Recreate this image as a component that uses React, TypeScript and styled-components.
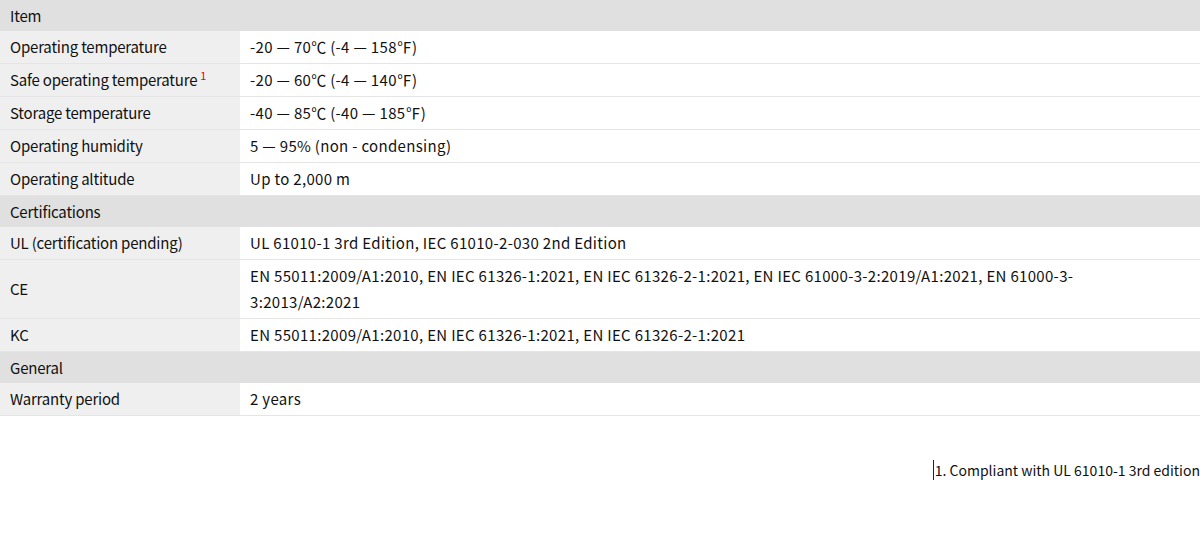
import React from "react";
import styled, { createGlobalStyle } from "styled-components";

const GlobalStyle = createGlobalStyle`
  html, body {
    margin: 0;
    padding: 0;
    background: #fff;
  }
  body {
    font-family: "Noto Sans CJK KR", "Noto Sans", sans-serif;
    color: #111;
  }
`;

const Page = styled.div`
  width: 1200px;
`;

const SpecTable = styled.table`
  width: 100%;
  border-collapse: collapse;
  font-size: 15px;
`;

const GroupCell = styled.th`
  background: #e0e0e0;
  text-align: left;
  font-weight: 400;
  height: 31px;
  padding: 0 10px;
  line-height: 26px;
  letter-spacing: -0.2px;
`;

const Row = styled.tr`
  border-bottom: 1px solid #e5e5e5;
`;

const LabelCell = styled.td`
  width: 220px;
  background: #efefef;
  padding: 3px 10px;
  height: 26px;
  line-height: 26px;
  vertical-align: middle;
  letter-spacing: -0.2px;
`;

const ValueCell = styled.td`
  background: #fff;
  padding: 3px 110px 3px 10px;
  line-height: 26px;
  vertical-align: middle;
  letter-spacing: 0.32px;
`;

const Note = styled.sup`
  color: #f00000;
  font-size: 11px;
  margin-left: 3px;
  vertical-align: 6px;
  line-height: 0;
`;

const Footnotes = styled.div`
  display: flex;
  justify-content: flex-end;
  margin-top: 44px;
  font-size: 14px;
`;

const Footnote = styled.p`
  margin: 0;
  padding-left: 1px;
  border-left: 1px solid #222;
  line-height: 20px;
`;

interface Spec {
  label: string;
  value: string;
  note?: number;
}

interface Group {
  title: string;
  rows: Spec[];
}

const groups: Group[] = [
  {
    title: "Item",
    rows: [
      { label: "Operating temperature", value: "-20 — 70℃ (-4 — 158℉)" },
      { label: "Safe operating temperature", value: "-20 — 60℃ (-4 — 140℉)", note: 1 },
      { label: "Storage temperature", value: "-40 — 85℃ (-40 — 185℉)" },
      { label: "Operating humidity", value: "5 — 95% (non  - condensing)" },
      { label: "Operating altitude", value: "Up to 2,000 m" },
    ],
  },
  {
    title: "Certifications",
    rows: [
      { label: "UL (certification pending)", value: "UL 61010-1 3rd Edition, IEC 61010-2-030 2nd Edition" },
      {
        label: "CE",
        value:
          "EN 55011:2009/A1:2010, EN IEC 61326-1:2021, EN IEC 61326-2-1:2021, EN IEC 61000-3-2:2019/A1:2021, EN 61000-3-3:2013/A2:2021",
      },
      { label: "KC", value: "EN 55011:2009/A1:2010, EN IEC 61326-1:2021, EN IEC 61326-2-1:2021" },
    ],
  },
  {
    title: "General",
    rows: [{ label: "Warranty period", value: "2 years" }],
  },
];

const App: React.FC = () => {
  return (
    <Page>
      <GlobalStyle />
      <SpecTable>
        <tbody>
          {groups.map((group) => (
            <React.Fragment key={group.title}>
              <tr>
                <GroupCell colSpan={2}>{group.title}</GroupCell>
              </tr>
              {group.rows.map((row) => (
                <Row key={row.label}>
                  <LabelCell>
                    {row.label}
                    {row.note && <Note>{row.note}</Note>}
                  </LabelCell>
                  <ValueCell>{row.value}</ValueCell>
                </Row>
              ))}
            </React.Fragment>
          ))}
        </tbody>
      </SpecTable>
      <Footnotes>
        <Footnote>1. Compliant with UL 61010-1 3rd edition</Footnote>
      </Footnotes>
    </Page>
  );
};

export default App;
